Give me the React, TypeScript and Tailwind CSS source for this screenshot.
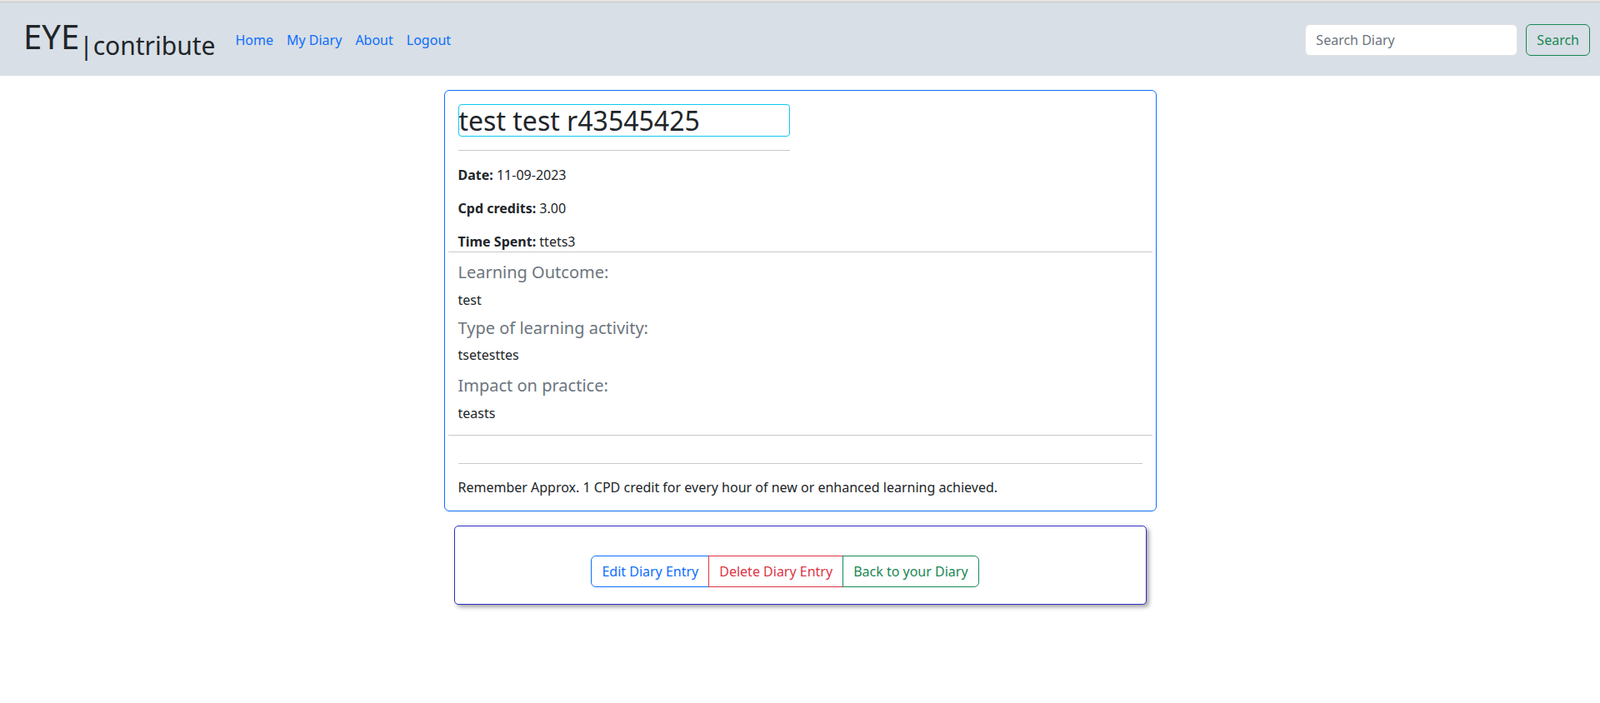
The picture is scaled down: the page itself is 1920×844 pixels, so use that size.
const nav = [
  { href: "#", label: "Home" },
  { href: "#", label: "My Diary" },
  { href: "#", label: "About" },
  { href: "#", label: "Logout" },
] as const;

const sections = [
  { title: "Learning Outcome:", body: "test", mt: "mt-[12px]", bodyMt: "mt-[9px]" },
  { title: "Type of learning activity:", body: "tsetesttes", mt: "mt-[10px]", bodyMt: "mt-[8px]" },
  { title: "Impact on practice:", body: "teasts", mt: "mt-[13px]", bodyMt: "mt-[9px]" },
];

function Header() {
  return (
    <header>
      <div className="h-[2px] bg-[#e4e4e4]" />
      <div className="h-px bg-[#c8c8c8]" />
      <div className="flex h-[88px] items-center justify-between bg-[#d8dfe6] pl-[28px] pr-[12px]">
        <div className="flex items-center">
          <a href="#" className="whitespace-nowrap text-[#212529]">
            <span className="text-[40px] leading-none">EYE</span>
            <span className="align-[-7px] text-[30px] leading-none">|contribute</span>
          </a>
          <nav className="ml-[16px] flex items-center pt-[2px]">
            {nav.map((item) => (
              <a key={item.label} href={item.href} className="px-2 text-base leading-6 text-[#0d6efd]">
                {item.label}
              </a>
            ))}
          </nav>
        </div>
        <form className="flex items-center gap-[10px] pt-[1px]" onSubmit={(e) => e.preventDefault()}>
          <input
            type="search"
            placeholder="Search Diary"
            className="h-[38px] w-[255px] rounded-[6px] border border-[#dee2e6] bg-white px-3 text-base text-[#212529] placeholder:text-[#6c757d] focus:outline-none"
          />
          <button
            type="submit"
            className="h-[38px] rounded-[6px] border border-[#198754] px-3 text-base text-[#198754]"
          >
            Search
          </button>
        </form>
      </div>
    </header>
  );
}

function Field({ label, value }: { label: string; value: string }) {
  return (
    <p className="leading-6">
      <span className="font-bold">{label}</span> {value}
    </p>
  );
}

export default function App() {
  return (
    <div className="min-h-[844px] bg-white text-base text-[#212529]" style={{ fontFamily: '"Noto Sans", "Open Sans", sans-serif' }}>
      <Header />
      <main className="pt-[17px]">
        <div className="mx-auto w-[855px] rounded-[6px] border border-[#0d6efd] bg-white p-4">
          <div className="w-[398px]">
            <input
              readOnly
              value="test test r43545425"
              className="h-[39px] w-full rounded-[4px] border border-[#0dcaf0] px-0 text-[32px] leading-[37px] text-[#212529] focus:outline-none"
            />
            <hr className="mt-4 border-t border-[#c8c9ca]" />
          </div>
          <div className="mt-[17px] space-y-4">
            <Field label="Date:" value="11-09-2023" />
            <Field label="Cpd credits:" value="3.00" />
            <Field label="Time Spent:" value="ttets3" />
          </div>
          <hr className="-mx-3 border-t border-[#c8c9ca]" />
          {sections.map((s) => (
            <div key={s.title}>
              <h5 className={`${s.mt} text-xl leading-6 text-[#6c757d]`}>{s.title}</h5>
              <p className={`${s.bodyMt} leading-6`}>{s.body}</p>
            </div>
          ))}
          <hr className="-mx-3 mt-[14px] border-t border-[#c8c9ca]" />
          <hr className="mt-[33px] border-t border-[#c8c9ca]" />
          <p className="mt-[16px] leading-6">
            Remember Approx. 1 CPD credit for every hour of new or enhanced learning achieved.
          </p>
        </div>

        <div className="mx-auto mt-[17px] w-[831px] rounded-[5px] border border-[#2f2fc4] bg-white pt-[35px] pb-[20px] shadow-[3px_3px_5px_rgba(0,0,0,0.35)]">
          <div className="flex justify-center pr-[36px]">
            <div className="flex">
              <a href="#" className="relative rounded-l-[6px] border border-[#0d6efd] px-3 py-[6px] leading-6 text-[#0d6efd]">
                Edit Diary Entry
              </a>
              <a href="#" className="relative -ml-px border border-[#dc3545] px-3 py-[6px] leading-6 text-[#dc3545]">
                Delete Diary Entry
              </a>
              <a href="#" className="relative -ml-px rounded-r-[6px] border border-[#198754] px-3 py-[6px] leading-6 text-[#198754]">
                Back to your Diary
              </a>
            </div>
          </div>
        </div>
      </main>
    </div>
  );
}
